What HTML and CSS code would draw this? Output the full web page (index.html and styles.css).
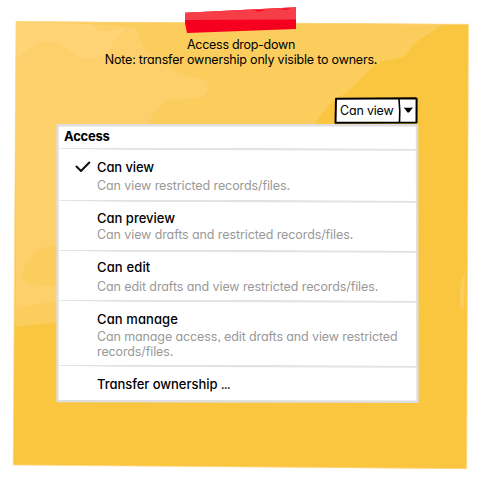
FILE: index.html
```html
<!DOCTYPE html>
<html lang="en">
<head>
<meta charset="utf-8">
<title>Access drop-down</title>
<link rel="stylesheet" href="styles.css">
</head>
<body>
<main class="board">
  <svg class="paper" viewBox="0 0 483 477" aria-hidden="true">
    <path fill="#fbc63f" d="M16 21.5 468.5 24.2 466.7 469 13.2 465Z"/>
    <path fill="#fbcd5c" d="M16 21.5 443 24 433 31Q418 40 412 46 410 53 403 57L380 62Q370 67 360 80 350 92 337 98 317 115 314 130L180 300 56 322.500 16 327Q14 318 16 308Z"/>
    <path fill="#fed06c" d="M16 21.500 88 24 130 27Q138 27 138 32 140 47 150 54L165 65Q178 75 200 78 208 80 208 88 207 97 196 98L170 100Q160 102 147 124L100 292 56 301 20 307Q16 308 15.500 313Z"/>
    <path fill="#fed476" d="M17 22 88 24Q97 26 97 31 105 34 122 28 127 29 118 36 113 41 109 50 99 59 83 58 74 55 66 47 57 40 48 41 35 42 17 58Z"/>
    <path fill="#fbcd5c" d="M60 245Q42 244 31 257 22 268 23 278 27 288 60 285Z"/>
    <path fill="#fbcd5c" d="M465 270Q459 285 460 303 462 313 464 306Z"/>
    <path class="paper-edge" d="M16 21.700 468.500 24.300 466.700 468.500 13.200 465Z"/>
    <path fill="#f6001f" d="M185 12.800 296 7.300V29L187 33 185 23Z"/>
    <path fill="#f73d48" d="M185 12.800 296 7.300V19.500L185 20Z"/>
    <path fill="#f6001f" d="M255 10.300 265 9.800Q262 12 256 11.300ZM281 8.700 290 8.200Q287 10.500 282 9.500Z"/>
  </svg>

  <header class="note">
    <p class="note-title">Access drop-down</p>
    <p class="note-line">Note: transfer ownership only visible to owners.</p>
  </header>

  <div class="select">
    <svg class="select-frame" viewBox="0 0 84 28" aria-hidden="true">
      <path class="ink" d="M2 1.800 82 1.300 82.600 2 82.500 25.500 1.500 25.700Z"/>
      <path class="ink-thin" d="M65 2Q66.300 14 65.500 25.500"/>
      <path fill="#000" d="M69.800 10.500Q74 11.200 79 10.500L75 15.500H73.500Z"/>
    </svg>
    <span class="select-value">Can view</span>
  </div>

  <section class="panel">
    <svg class="panel-frame" viewBox="0 0 363 280" aria-hidden="true">
      <path d="M1.500 1.300 361 1.300 361.500 277.800 1.500 277Z"/>
    </svg>
    <h1 class="panel-title">Access</h1>
    <svg class="rule" viewBox="0 0 357 3"><path d="M0 0H200L357 1V2.700L60 1.800 0 .8Z"/></svg>
    <div class="item item-view">
      <svg class="check" viewBox="0 0 16 12"><path d="M1.500 5.500 6 10 14.300 1.500"/></svg>
      <h2 class="name name-view">Can view</h2>
      <p class="desc desc-view">Can view restricted records/files.</p>
    </div>
    <svg class="rule" viewBox="0 0 357 3"><path d="M0 0H200L357 1V2.700L60 1.800 0 .8Z"/></svg>
    <div class="item item-preview">
      <h2 class="name name-preview">Can preview</h2>
      <p class="desc desc-preview">Can view drafts and restricted records/files.</p>
    </div>
    <svg class="rule" viewBox="0 0 357 3"><path d="M0 0H200L357 1V2.700L60 1.800 0 .8Z"/></svg>
    <div class="item item-edit">
      <h2 class="name name-edit">Can edit</h2>
      <p class="desc desc-edit">Can edit drafts and view restricted records/files.</p>
    </div>
    <svg class="rule" viewBox="0 0 357 3"><path d="M0 0H200L357 1V2.700L60 1.800 0 .8Z"/></svg>
    <div class="item item-manage">
      <h2 class="name name-manage">Can manage</h2>
      <p class="desc desc-manage">Can manage access, edit drafts and view restricted<br>records/files.</p>
    </div>
    <svg class="rule" viewBox="0 0 357 3"><path d="M0 0H200L357 1V2.700L60 1.800 0 .8Z"/></svg>
    <div class="item item-transfer">
      <h2 class="name name-transfer">Transfer ownership <span class="dots">...</span></h2>
    </div>
  </section>
</main>
</body>
</html>
```
FILE: styles.css
```css
* { box-sizing: border-box; }
body, h1, h2, p { margin: 0; }
body {
  background: #fff;
  color: #000;
  font: 400 12.5px/15px Inter, "Liberation Sans", sans-serif;
  font-feature-settings: "cv11" 1, "ss03" 1;
}
.board {
  position: relative;
  width: 483px;
  height: 477px;
  padding-top: 37px;
  overflow: hidden;
}
.paper { position: absolute; inset: 0; width: 483px; height: 477px; }
.paper-edge { fill: none; stroke: #fed98a; stroke-width: .7; }
.note { position: relative; width: 482px; text-align: center; white-space: nowrap; }
.note-title { letter-spacing: -.28px; }
.note-line { letter-spacing: -.2px; }
.select {
  position: relative;
  width: 84px;
  height: 28px;
  margin: 30px 0 0 334px;
  padding: 6px 0 0 6px;
}
.select-frame { position: absolute; inset: 0; width: 84px; height: 28px; }
.select-value { position: relative; display: block; white-space: nowrap; letter-spacing: -.2px; }
.ink { fill: #fff; stroke: #000; stroke-width: 2; stroke-linejoin: round; }
.ink-thin { fill: none; stroke: #000; stroke-width: 1.6; }
.panel {
  position: relative;
  width: 363px;
  height: 280px;
  margin: -1px 0 0 56px;
  white-space: nowrap;
}
.panel-frame { position: absolute; inset: 0; width: 363px; height: 280px; }
.panel-frame path { fill: #fff; stroke: #dedede; stroke-width: 2.4; stroke-linejoin: round; }
.panel-title {
  position: relative;
  height: 24px;
  padding: 5px 0 0 8px;
  font-size: 13px;
  line-height: 15px;
  font-weight: 700;
  letter-spacing: -.25px;
}
.rule { position: relative; display: block; width: 357px; height: 3px; margin-left: 3px; fill: #e2e2e2; }
.item { position: relative; padding-left: 41px; }
.item-view { height: 49px; padding-top: 9px; }
.item-preview { height: 47px; padding-top: 8px; }
.item-edit { height: 47px; padding-top: 7px; }
.item-manage { height: 62px; padding-top: 9px; }
.item-transfer { padding-top: 9px; }
.name { font-size: 13px; line-height: 15px; font-weight: 500; }
.name-view { letter-spacing: -.1px; }
.name-edit { letter-spacing: .15px; }
.name-manage { letter-spacing: .1px; }
.name-transfer { letter-spacing: -.04px; }
.dots { letter-spacing: -1px; }
.desc { color: #999; letter-spacing: -.1px; }
.desc-view { margin-top: 3px; }
.desc-preview { margin-top: 1px; }
.desc-edit { margin-top: 4px; }
.desc-manage { margin-top: 2px; letter-spacing: -.12px; }
.check { position: absolute; left: 19px; top: 10px; width: 16px; height: 12px; }
.check path { fill: none; stroke: #111; stroke-width: 2; stroke-linejoin: round; stroke-linecap: round; }
```
